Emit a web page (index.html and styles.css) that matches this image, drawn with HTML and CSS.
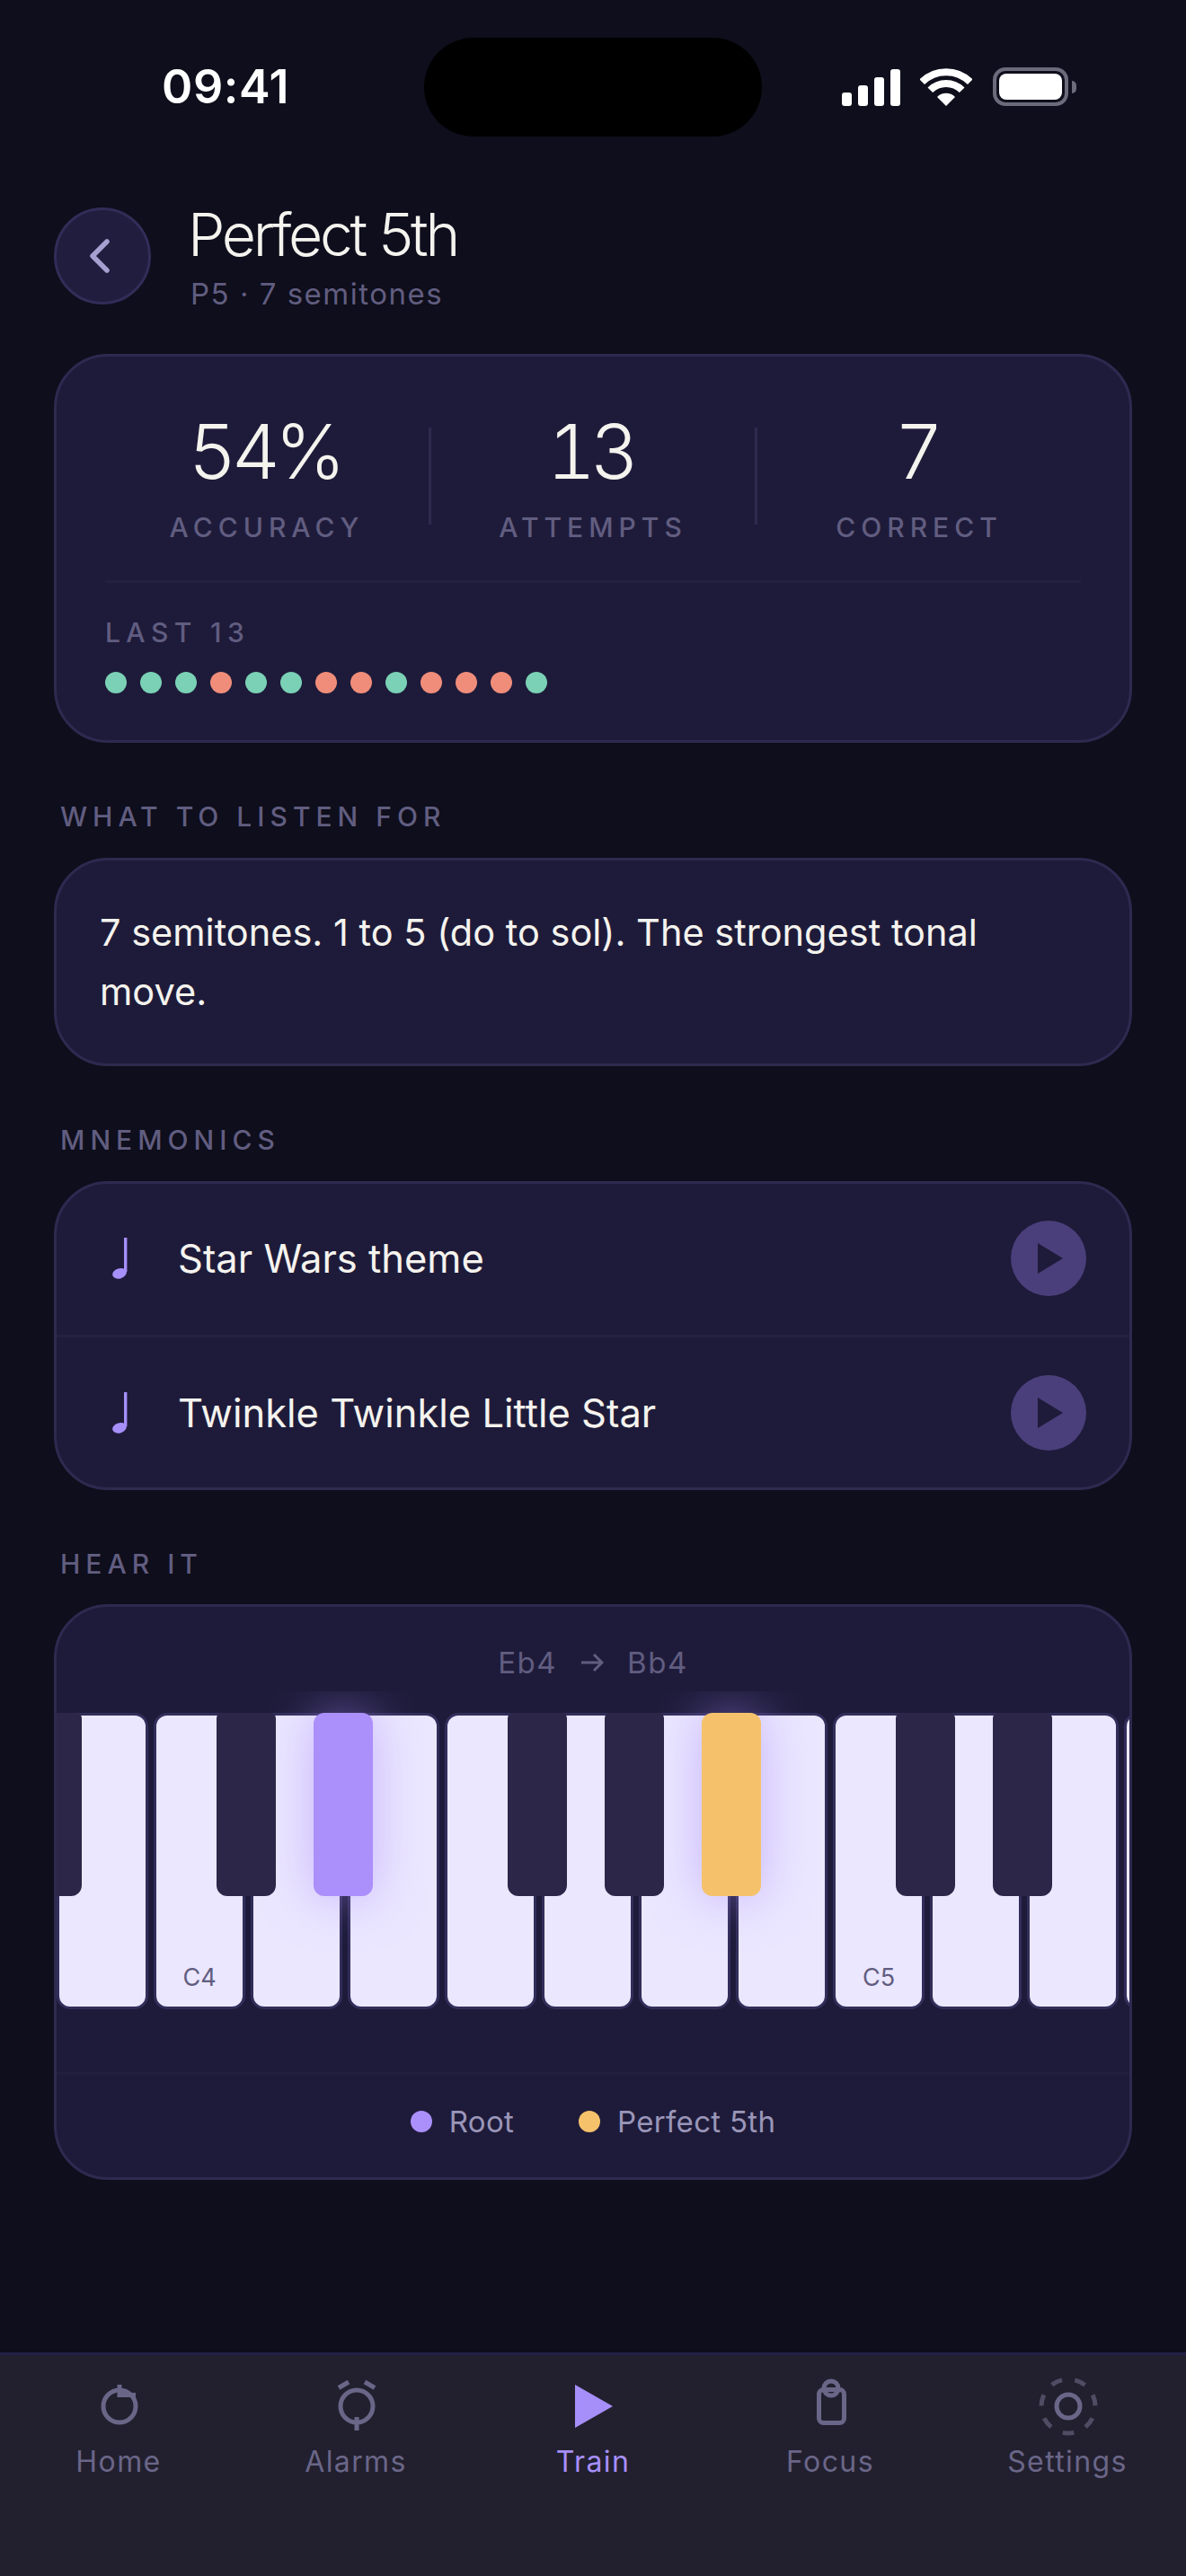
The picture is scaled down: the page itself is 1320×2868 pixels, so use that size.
FILE: index.html
```html
<!DOCTYPE html>
<html lang="en">
<head>
<meta charset="utf-8">
<title>Perfect 5th</title>
<link rel="stylesheet" href="styles.css">
</head>
<body>
<div class="screen">
  <div class="island"></div>
  <div class="status">
    <span class="time">09:41</span>
    <div class="status-icons">
      <div class="signal"><i class="s1"></i><i class="s2"></i><i class="s3"></i><i class="s4"></i></div>
      <svg class="wifi" width="58" height="42" viewBox="0 0 58 42"><path class="wifi-arc" d="M2.2 15.2a38 38 0 0 1 53.6 0"/><path class="wifi-arc" d="M11.3 24.3a25 25 0 0 1 35.4 0"/><path class="wifi-fill" d="M19 32a14 14 0 0 1 20 0L29 42z"/></svg>
      <div class="battery"><div class="battery-body"><div class="battery-level"></div></div><div class="battery-nub"></div></div>
    </div>
  </div>

  <main class="content">
    <header class="header">
      <div class="back"><svg width="24" height="38" viewBox="0 0 24 38"><path d="M20 3 4 19l16 16" class="chev"/></svg></div>
      <div class="heading">
        <h1 class="title">Perfect 5th</h1>
        <p class="subtitle">P5 · 7 semitones</p>
      </div>
    </header>

    <section class="card card-stats">
      <div class="stats">
        <div class="stat"><div class="stat-val">54%</div><div class="stat-label">ACCURACY</div></div>
        <div class="stat-div"></div>
        <div class="stat"><div class="stat-val">13</div><div class="stat-label">ATTEMPTS</div></div>
        <div class="stat-div"></div>
        <div class="stat"><div class="stat-val">7</div><div class="stat-label">CORRECT</div></div>
      </div>
      <div class="recent">
        <div class="recent-label">LAST 13</div>
        <div class="dots">
          <i class="dot ok"></i><i class="dot ok"></i><i class="dot ok"></i><i class="dot no"></i><i class="dot ok"></i><i class="dot ok"></i><i class="dot no"></i><i class="dot no"></i><i class="dot ok"></i><i class="dot no"></i><i class="dot no"></i><i class="dot no"></i><i class="dot ok"></i>
        </div>
      </div>
    </section>

    <h2 class="section">WHAT TO LISTEN FOR</h2>
    <section class="card card-text">
      <p class="listen">7 semitones. 1 to 5 (do to sol). The strongest tonal move.</p>
    </section>

    <h2 class="section">MNEMONICS</h2>
    <section class="card">
      <div class="row row-first">
        <svg class="note" width="18" height="46" viewBox="0 0 18 46"><path d="M13 0h3.4v38h-3.4z"/><ellipse cx="8" cy="39.8" rx="8" ry="5.6" transform="rotate(-18 8 39.8)"/></svg>
        <span class="row-text">Star Wars theme</span>
        <div class="play"><svg width="28" height="34" viewBox="0 0 28 34"><path d="M0 0 28 17 0 34z"/></svg></div>
      </div>
      <div class="row">
        <svg class="note" width="18" height="46" viewBox="0 0 18 46"><path d="M13 0h3.4v38h-3.4z"/><ellipse cx="8" cy="39.8" rx="8" ry="5.6" transform="rotate(-18 8 39.8)"/></svg>
        <span class="row-text">Twinkle Twinkle Little Star</span>
        <div class="play"><svg width="28" height="34" viewBox="0 0 28 34"><path d="M0 0 28 17 0 34z"/></svg></div>
      </div>
    </section>

    <h2 class="section section-tight">HEAR IT</h2>
    <section class="card">
      <div class="route"><span>Eb4</span><svg width="26" height="22" viewBox="0 0 26 22"><path d="M1 11h23M15 2l9 9-9 9" class="arrow"/></svg><span>Bb4</span></div>
      <div class="keyboard">
        <div class="keys">
          <div class="key"><i class="black"></i></div>
          <div class="key"></div>
          <div class="key"><span class="key-name">C4</span><i class="black"></i></div>
          <div class="key"><i class="black hit root"></i></div>
          <div class="key"></div>
          <div class="key"><i class="black"></i></div>
          <div class="key"><i class="black"></i></div>
          <div class="key"><i class="black hit fifth"></i></div>
          <div class="key"></div>
          <div class="key"><span class="key-name">C5</span><i class="black"></i></div>
          <div class="key"><i class="black"></i></div>
          <div class="key"></div>
          <div class="key"></div>
        </div>
      </div>
      <div class="legend">
        <div class="legend-item"><i class="legend-dot root"></i><span>Root</span></div>
        <div class="legend-item"><i class="legend-dot fifth"></i><span>Perfect 5th</span></div>
      </div>
    </section>
  </main>

  <nav class="tabs">
    <div class="tab">
      <svg class="tab-icon" width="80" height="70" viewBox="0 0 80 70"><circle cx="41" cy="35" r="18"/><path d="M41 11v14M41 22.500h18"/></svg>
      <span>Home</span>
    </div>
    <div class="tab">
      <svg class="tab-icon" width="80" height="70" viewBox="0 0 80 70"><circle cx="41" cy="35" r="18"/><path d="M41 47v15M21 14.500 32 8M50 8l11 6.500"/></svg>
      <span>Alarms</span>
    </div>
    <div class="tab tab-on">
      <svg class="tab-icon" width="80" height="70" viewBox="0 0 80 70"><path class="tab-solid" d="M20 11 62 35 20 59z"/></svg>
      <span>Train</span>
    </div>
    <div class="tab">
      <svg class="tab-icon" width="80" height="70" viewBox="0 0 80 70"><rect x="27.500" y="16.500" width="28" height="37" rx="5"/><circle cx="41" cy="15" r="8"/></svg>
      <span>Focus</span>
    </div>
    <div class="tab">
      <svg class="tab-icon" width="80" height="70" viewBox="0 0 80 70"><circle class="gear" cx="41" cy="35" r="30" transform="rotate(-25 41 35)"/><circle cx="41" cy="35" r="13"/></svg>
      <span>Settings</span>
    </div>
  </nav>
</div>
</body>
</html>
```

FILE: styles.css
```css
* { box-sizing: border-box; }
html, body { margin: 0; padding: 0; background: #0e0e1c; }
body { font-family: Inter, "Liberation Sans", sans-serif; }

.screen {
  position: relative;
  width: 1320px;
  height: 2868px;
  display: flex;
  flex-direction: column;
  background: #0e0e1c;
  color: #f5f3ee;
  overflow: hidden;
}

.island {
  position: absolute;
  left: 472px;
  top: 42px;
  width: 376px;
  height: 110px;
  border-radius: 55px;
  background: #000;
}

.status {
  height: 231px;
  padding: 70px 122px 0 180px;
  display: flex;
  justify-content: space-between;
  align-items: flex-start;
}
.time {
  font-size: 52px;
  line-height: 54px;
  font-weight: 600;
  letter-spacing: 0.600px;
  color: #fff;
}
.status-icons {
  display: flex;
  align-items: flex-end;
  height: 43px;
  margin-top: 5px;
  gap: 23px;
}
.signal { display: flex; align-items: flex-end; gap: 7px; height: 42px; margin-right: -1px; }
.signal i { display: block; width: 11px; background: #fff; border-radius: 3px; }
.s1 { height: 15px; }
.s2 { height: 23px; }
.s3 { height: 32px; }
.s4 { height: 41px; }
.wifi-arc { fill: none; stroke: #fff; stroke-width: 8; }
.wifi-fill { fill: #fff; }
.battery { display: flex; align-items: center; gap: 4px; height: 43px; }
.battery-body {
  width: 84px;
  height: 43px;
  border: 4px solid #6c6b7c;
  border-radius: 14px;
  padding: 3px;
}
.battery-level { width: 100%; height: 100%; background: #fff; border-radius: 8px; }
.battery-nub { width: 5px; height: 14px; background: #6c6b7c; border-radius: 0 5px 5px 0; }

.content { flex: 1; padding: 0 60px; }

.header { display: flex; align-items: flex-start; gap: 41px; height: 108px; }
.back {
  width: 108px;
  height: 108px;
  border-radius: 50%;
  background: #201d3e;
  border: 3px solid #312d58;
  display: flex;
  align-items: center;
  justify-content: center;
  padding-right: 6px;
}
.chev { fill: none; stroke: #a79fcf; stroke-width: 5.500; stroke-linecap: round; stroke-linejoin: round; }
.title {
  margin: -9px 0 0;
  font-size: 66px;
  line-height: 78px;
  font-weight: 300;
  letter-spacing: -3.300px;
  color: #f5f3ee;
}
.subtitle {
  margin: 7px 0 0 3px;
  font-size: 33px;
  line-height: 40px;
  font-weight: 400;
  letter-spacing: 1.500px;
  color: #615d80;
}

.card {
  background: #1e1b3a;
  border: 3px solid #2d2a50;
  border-radius: 60px;
  overflow: hidden;
}
.card-stats { margin-top: 55px; padding: 58px 54px 52px; }
.stats { display: flex; align-items: center; margin-bottom: 41px; }
.stat { flex: 1; text-align: center; }
.stat-val {
  padding-right: 6px;
  font-size: 84px;
  line-height: 96px;
  font-weight: 300;
  letter-spacing: -6px;
  font-variant-numeric: tabular-nums;
  color: #f5f3ee;
}
.stat-label {
  margin-top: 18px;
  font-size: 30px;
  line-height: 36px;
  font-weight: 500;
  letter-spacing: 6px;
  color: #615d80;
}
.stat-div { width: 3px; height: 108px; background: #2d2a50; }
.recent { border-top: 3px solid #24213f; padding-top: 37px; }
.recent-label {
  font-size: 30px;
  line-height: 36px;
  font-weight: 500;
  letter-spacing: 6.400px;
  color: #615d80;
}
.dots { display: flex; gap: 15px; margin-top: 26px; }
.dot { width: 24px; height: 24px; border-radius: 50%; }
.dot.ok { background: #7ad1b5; }
.dot.no { background: #f08d7a; }

.section {
  margin: 64px 0 28px 7px;
  font-size: 30px;
  line-height: 36px;
  font-weight: 500;
  letter-spacing: 6px;
  color: #615d80;
}
.section-tight { margin-bottom: 27px; }

.card-text { padding: 47px 48px; }
.listen {
  margin: 0;
  font-size: 41.500px;
  line-height: 66px;
  font-weight: 400;
  color: #f5f3ee;
}

.row {
  display: flex;
  align-items: center;
  height: 167px;
  padding: 0 48px 0 62px;
}
.row-first { height: 171px; padding-bottom: 3px; border-bottom: 3px solid #25223f; }
.note { fill: #a78ffa; flex: none; }
.row-text {
  flex: 1;
  margin-left: 55px;
  font-size: 43.500px;
  font-weight: 400;
  color: #f5f3ee;
}
.play {
  width: 84px;
  height: 84px;
  border-radius: 50%;
  background: #4a3f7a;
  display: flex;
  align-items: center;
  justify-content: center;
  padding-left: 3px;
}
.play svg { fill: #1e1b3a; }

.route {
  display: flex;
  justify-content: center;
  align-items: center;
  gap: 26px;
  padding: 42px 0 12px;
  font-size: 33px;
  line-height: 40px;
  letter-spacing: 1.500px;
  color: #615d80;
}
.arrow { fill: none; stroke: #615d80; stroke-width: 3; }

.keyboard { height: 424px; padding-top: 24px; overflow: hidden; }
.keys { display: flex; gap: 6px; margin-left: -108px; }
.key {
  position: relative;
  flex: none;
  width: 102px;
  height: 330px;
  background: #ebe7ff;
  border: 3px solid #322e5a;
  border-radius: 15px;
}
.key-name {
  position: absolute;
  left: 0;
  right: 0;
  bottom: 16px;
  text-align: center;
  font-size: 27px;
  line-height: 32px;
  color: #615d80;
}
.black {
  position: absolute;
  top: -3px;
  right: -37px;
  width: 66px;
  height: 204px;
  background: #2c2748;
  border-radius: 6px 6px 12px 12px;
  z-index: 2;
}
.black.hit { z-index: 1; border-radius: 12px; box-shadow: 0 0 54px rgba(167, 139, 250, 0.55); }
.black.root { background: #ab8ffb; }
.black.fifth { background: #f5c26b; }

.legend {
  border-top: 3px solid #211e3e;
  padding: 32px 0 42px;
  display: flex;
  justify-content: center;
  gap: 72px;
}
.legend-item {
  display: flex;
  align-items: center;
  gap: 19px;
  font-size: 33px;
  line-height: 40px;
  letter-spacing: 0.300px;
  color: #9a96b8;
}
.legend-dot { width: 24px; height: 24px; border-radius: 50%; }
.legend-dot.root { background: #ab8ffb; }
.legend-dot.fifth { background: #f5c26b; }

.tabs {
  height: 249px;
  display: flex;
  background: #22202f;
  border-top: 3px solid #221f48;
  padding-top: 22px;
}
.tab {
  flex: 1;
  display: flex;
  flex-direction: column;
  align-items: center;
  gap: 7px;
  font-size: 32px;
  line-height: 40px;
  letter-spacing: 1.400px;
  color: #6a6688;
}
.tab-icon { fill: none; stroke: #6a6688; stroke-width: 5; }
.tab-on { color: #a78ffa; }
.tab-solid { fill: #a78ffa; stroke: none; }
.gear { stroke: #4f4c63; stroke-width: 5; stroke-dasharray: 12.500 14.430; }
```
